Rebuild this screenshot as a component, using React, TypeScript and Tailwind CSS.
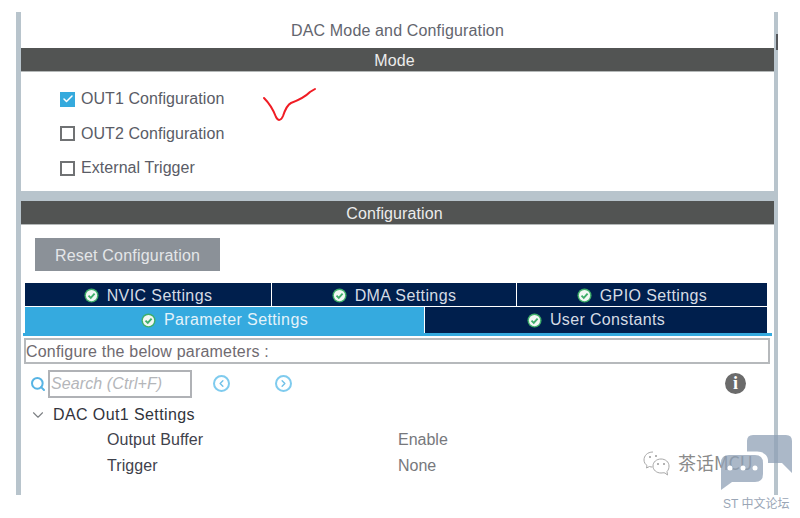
import { Check, ChevronDown, ChevronLeft, ChevronRight, Search } from "lucide-react";

const font = "[font-family:'Liberation_Sans',Arial,sans-serif]";

function OkIcon({ size = 15 }: { size?: number }) {
  return (
    <svg width={size} height={size} viewBox="0 0 16 16" className="shrink-0">
      <circle cx="8" cy="8" r="7.5" fill="#3fae6a" />
      <circle cx="8" cy="8" r="6" fill="#f2f7f4" />
      <path d="M4.8 8.2 7.2 10.5 11.3 5.9" fill="none" stroke="#3fae6a" strokeWidth="2" />
    </svg>
  );
}

function SectionBar({ title }: { title: string }) {
  return (
    <div className="h-[24px] shrink-0 flex items-center justify-center bg-[#525453] border-b border-[#b4b8b8] pt-[2px] pr-[6px] text-[16px] tracking-[0.1px] text-[#ececec]">
      {title}
    </div>
  );
}

function ModeRow({ label, checked }: { label: string; checked?: boolean }) {
  return (
    <div className="h-[34.5px] flex items-center gap-[6px]">
      {checked ? (
        <span className="w-[15px] h-[15px] bg-[#35aadd] flex items-center justify-center">
          <Check size={12} strokeWidth={3} className="text-white" />
        </span>
      ) : (
        <span className="w-[15px] h-[15px] border-2 border-[#707274] bg-white" />
      )}
      <span className="text-[16px] tracking-[0.06px] text-[#5a5c66]">{label}</span>
    </div>
  );
}

function TopTab({ label, width }: { label: string; width: string }) {
  return (
    <div
      className={`${width} h-full flex items-center justify-center gap-[8px] bg-[#001f4d] pt-[2px] text-[16px] tracking-[0.4px] text-[#d5dbe4]`}
    >
      <OkIcon />
      <span>{label}</span>
    </div>
  );
}

function ParamRow({ name, value }: { name: string; value: string }) {
  return (
    <div className="h-[26px] flex items-center text-[16px]">
      <span className="w-[377px] pl-[86px] tracking-[0.1px] text-[#3f424c]">{name}</span>
      <span className="text-[#77787c]">{value}</span>
    </div>
  );
}

export default function App() {
  return (
    <div className={`relative w-[800px] h-[518px] overflow-hidden bg-white pt-[12px] pl-[16px] ${font}`}>
      <div className="w-[762px] h-[483px] bg-[#b8c4cc] pl-[5px] pr-[4px] flex flex-col">
        <div className="h-[36px] shrink-0 flex items-center justify-center bg-white pt-[2px] text-[16px] tracking-[0.15px] text-[#63656e]">
          DAC Mode and Configuration
        </div>
        <SectionBar title="Mode" />
        <div className="h-[119px] shrink-0 bg-white pl-[39px] pt-[10px]">
          <ModeRow label="OUT1 Configuration" checked />
          <ModeRow label="OUT2 Configuration" />
          <ModeRow label="External Trigger" />
        </div>
        <div className="h-[10px] shrink-0" />
        <SectionBar title="Configuration" />
        <div className="flex-1 bg-white pt-[13px] flex flex-col">
          <div className="ml-[14px] w-[185px] h-[33px] bg-[#8b9198] pt-[2px] flex items-center justify-center text-[16px] tracking-[0.2px] text-[#e4e6e8]">
            Reset Configuration
          </div>
          <div className="mt-[12px] ml-[4px] w-[742px] flex flex-col">
            <div className="h-[23px] flex gap-px">
              <TopTab label="NVIC Settings" width="w-[246px]" />
              <TopTab label="DMA Settings" width="w-[244px]" />
              <TopTab label="GPIO Settings" width="w-[250px]" />
            </div>
            <div className="mt-px h-[26px] flex gap-px">
              <div className="w-[399px] h-full flex items-center justify-center gap-[8px] bg-[#35aadf] text-[16px] tracking-[0.4px] text-[#e4f3fa]">
                <OkIcon />
                <span>Parameter Settings</span>
              </div>
              <div className="flex-1 h-full flex items-center justify-center gap-[8px] bg-[#001f4d] text-[16px] tracking-[0.35px] text-[#d5dbe4]">
                <OkIcon />
                <span>User Constants</span>
              </div>
            </div>
          </div>
          <div className="ml-[2px] w-[749px] h-[3px] bg-[#35aadf]" />
          <div className="ml-[3px] mt-[2px] w-[746px] h-[26px] shrink-0 border-2 border-[#b6b9bc] pt-[2px] flex items-center text-[16px] tracking-[0.2px] text-[#6f6a70]">
            Configure the below parameters :
          </div>
          <div className="h-[38px] flex items-center pt-[1px] pl-[9px] pr-[28px]">
            <Search size={16} strokeWidth={3} className="text-[#58b4e4]" />
            <div className="ml-[2px] w-[144px] h-[28px] border-2 border-[#b0b2b6] flex items-center pl-[1px] text-[16px] tracking-[0.1px] italic text-[#b4b6ba]">
              Search (Ctrl+F)
            </div>
            <span className="ml-[21px] w-[17px] h-[17px] rounded-full border-2 border-[#7fcbee] flex items-center justify-center">
              <ChevronLeft size={11} strokeWidth={3} className="text-[#6fc0e8]" />
            </span>
            <span className="ml-[45px] w-[17px] h-[17px] rounded-full border-2 border-[#7fcbee] flex items-center justify-center">
              <ChevronRight size={11} strokeWidth={3} className="text-[#6fc0e8]" />
            </span>
            <span className="ml-auto w-[21px] h-[21px] rounded-full bg-[#6b6b6b] flex items-center justify-center text-[18px] font-bold text-white [font-family:'Liberation_Serif',serif]">
              i
            </span>
          </div>
          <div className="h-[25px] flex items-center pl-[8px] gap-[6px] text-[16px] tracking-[0.4px] text-[#32343c]">
            <ChevronDown size={18} strokeWidth={1.5} className="text-[#7d8084]" />
            <span>DAC Out1 Settings</span>
          </div>
          <ParamRow name="Output Buffer" value="Enable" />
          <ParamRow name="Trigger" value="None" />
        </div>
      </div>

      {/* scrollbar scrap at the right edge */}
      <div className="absolute left-[776px] top-[34px] w-[2px] h-[16px] bg-[#55585c]" />

      {/* hand drawn tick */}
      <svg className="absolute left-[260px] top-[85px]" width="60" height="40" viewBox="0 0 60 40">
        <path
          d="M4 13C9 18 13 24 16 32C18 36 21 36 23 31C25 25 27 20 31 18C39 15 46 11 50 7L55 4"
          fill="none"
          stroke="#f01c24"
          strokeWidth="2"
          strokeLinecap="round"
        />
      </svg>

      {/* watermark */}
      <div className="absolute left-[642px] top-[449px] flex items-center gap-[8px] text-[#8a8a8a]">
        <svg width="28" height="26" viewBox="0 0 28 26" fill="none" stroke="#a8a8a8" strokeWidth="1">
          <path d="M11 2C5 2 2 6 2 10C2 12.5 3.5 14.5 5 15.5L4.5 18L7.5 16.5C8.5 17 9.5 17 10.5 17" />
          <path d="M19 9C14.5 9 11 12 11 16C11 20 14.5 23 19 23C20.5 23 21.5 22.5 23 23L25.5 25L25 21.5C26.5 20 27 18 27 16C27 12 23.5 9 19 9Z" />
          <circle cx="8" cy="7" r="1" fill="#9a9a9a" stroke="none" />
          <circle cx="14" cy="6" r="1" fill="#9a9a9a" stroke="none" />
          <circle cx="16" cy="14" r="1" fill="#9a9a9a" stroke="none" />
          <circle cx="22" cy="14" r="1" fill="#9a9a9a" stroke="none" />
        </svg>
        <span className="text-[18px] [font-family:'Noto_Sans_CJK_SC','Liberation_Sans',sans-serif]">茶话MCU</span>
      </div>
      <svg className="absolute left-[720px] top-[434px]" width="74" height="58" viewBox="0 0 74 58">
        <path
          d="M33 1H66Q72 1 72 7V39L62 29H48V26C48 22 44 17.5 37 17.5H27V7Q27 1 33 1Z"
          fill="#8fa0b5"
          fillOpacity="0.75"
        />
        <path
          d="M9 21H35Q43 21 43 29V40Q43 48 35 48H12L1 56V29Q1 21 9 21Z"
          fill="#8fa0b5"
          fillOpacity="0.75"
        />
        <circle cx="10" cy="34" r="2.5" fill="#fff" />
        <circle cx="23" cy="34" r="2.5" fill="#fff" />
        <circle cx="35" cy="34" r="2.5" fill="#fff" />
      </svg>
      <div className="absolute left-[723px] top-[495px] text-[12px] text-[#9aa6b6] [font-family:'Liberation_Sans','Noto_Sans_CJK_SC',sans-serif]">
        ST 中文论坛
      </div>
    </div>
  );
}
